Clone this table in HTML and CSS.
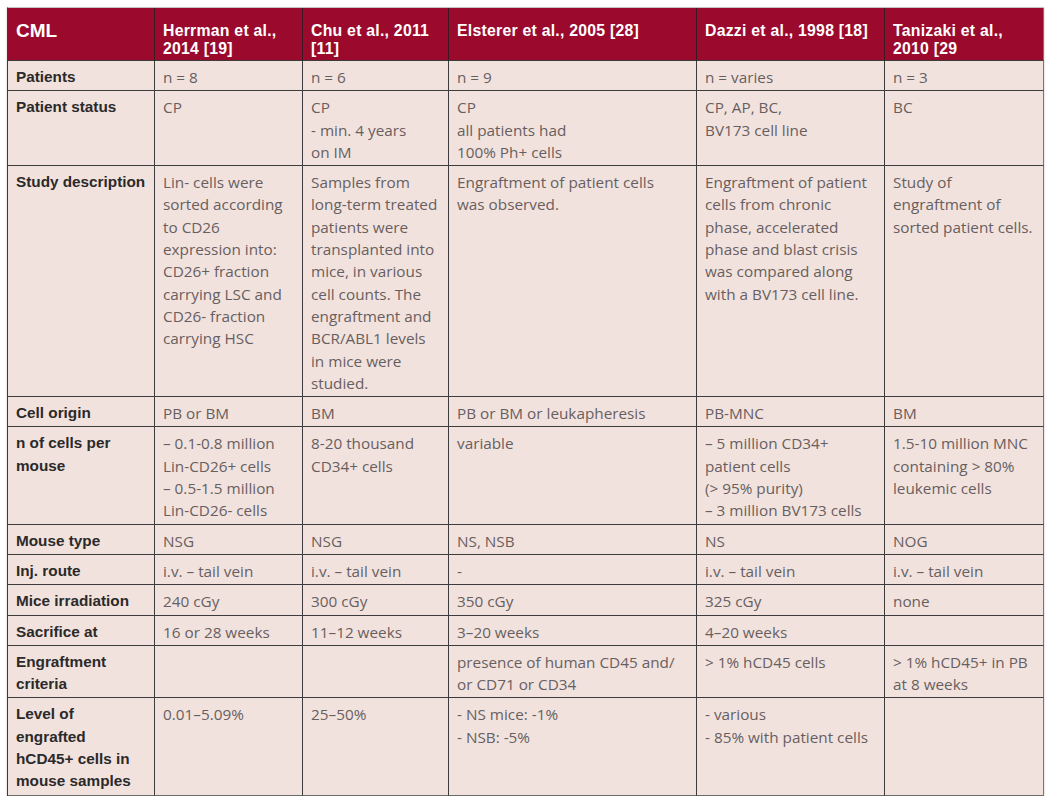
FILE: index.html
```html
<!DOCTYPE html>
<html>
<head>
<meta charset="utf-8">
<link rel="stylesheet" href="styles.css">
</head>
<body>
<div class="page">
<table class="cml">
  <colgroup>
    <col class="c1"><col class="c2"><col class="c3"><col class="c4"><col class="c5"><col class="c6">
  </colgroup>
  <thead>
    <tr>
      <th class="title">CML</th>
      <th>Herrman et al.,<br>2014 [19]</th>
      <th>Chu et al., 2011<br>[11]</th>
      <th>Elsterer et al., 2005 [28]</th>
      <th>Dazzi et al., 1998 [18]</th>
      <th>Tanizaki et al.,<br>2010 [29</th>
    </tr>
  </thead>
  <tbody>
    <tr>
      <th>Patients</th>
      <td>n = 8</td><td>n = 6</td><td>n = 9</td><td>n = varies</td><td>n = 3</td>
    </tr>
    <tr>
      <th>Patient status</th>
      <td>CP</td>
      <td>CP<br>- min. 4 years<br>on IM</td>
      <td>CP<br>all patients had<br>100% Ph+ cells</td>
      <td>CP, AP, BC,<br>BV173 cell line</td>
      <td>BC</td>
    </tr>
    <tr>
      <th>Study description</th>
      <td>Lin- cells were<br>sorted according<br>to CD26<br>expression into:<br>CD26+ fraction<br>carrying LSC and<br>CD26- fraction<br>carrying HSC</td>
      <td>Samples from<br>long-term treated<br>patients were<br>transplanted into<br>mice, in various<br>cell counts. The<br>engraftment and<br>BCR/ABL1 levels<br>in mice were<br>studied.</td>
      <td>Engraftment of patient cells<br>was observed.</td>
      <td>Engraftment of patient<br>cells from chronic<br>phase, accelerated<br>phase and blast crisis<br>was compared along<br>with a BV173 cell line.</td>
      <td>Study of<br>engraftment of<br>sorted patient cells.</td>
    </tr>
    <tr>
      <th>Cell origin</th>
      <td>PB or BM</td><td>BM</td><td>PB or BM or leukapheresis</td><td>PB-MNC</td><td>BM</td>
    </tr>
    <tr>
      <th>n of cells per<br>mouse</th>
      <td>– 0.1-0.8 million<br>Lin-CD26+ cells<br>– 0.5-1.5 million<br>Lin-CD26- cells</td>
      <td>8-20 thousand<br>CD34+ cells</td>
      <td>variable</td>
      <td>– 5 million CD34+<br>patient cells<br>(&gt; 95% purity)<br>– 3 million BV173 cells</td>
      <td>1.5-10 million MNC<br>containing &gt; 80%<br>leukemic cells</td>
    </tr>
    <tr>
      <th>Mouse type</th>
      <td>NSG</td><td>NSG</td><td>NS, NSB</td><td>NS</td><td>NOG</td>
    </tr>
    <tr>
      <th>Inj. route</th>
      <td>i.v. – tail vein</td><td>i.v. – tail vein</td><td>-</td><td>i.v. – tail vein</td><td>i.v. – tail vein</td>
    </tr>
    <tr>
      <th>Mice irradiation</th>
      <td>240 cGy</td><td>300 cGy</td><td>350 cGy</td><td>325 cGy</td><td>none</td>
    </tr>
    <tr>
      <th>Sacrifice at</th>
      <td>16 or 28 weeks</td><td>11–12 weeks</td><td>3–20 weeks</td><td>4–20 weeks</td><td></td>
    </tr>
    <tr>
      <th>Engraftment<br>criteria</th>
      <td></td><td></td>
      <td>presence of human CD45 and/<br>or CD71 or CD34</td>
      <td>&gt; 1% hCD45 cells</td>
      <td>&gt; 1% hCD45+ in PB<br>at 8 weeks</td>
    </tr>
    <tr>
      <th>Level of<br>engrafted<br>hCD45+ cells in<br>mouse samples</th>
      <td>0.01–5.09%</td>
      <td>25–50%</td>
      <td>- NS mice: -1%<br>- NSB: -5%</td>
      <td>- various<br>- 85% with patient cells</td>
      <td></td>
    </tr>
  </tbody>
</table>
</div>
</body>
</html>
```

FILE: styles.css
```css
html, body {
  margin: 0;
  padding: 0;
  background: #ffffff;
}

.page {
  padding: 7px 0 0 7px;
}

.cml {
  border-collapse: separate;
  border-spacing: 0;
  table-layout: fixed;
  width: 1037px;
  border-left: 1px solid #3c3c3c;
  border-top: 1px solid #c9c4c4;
  box-shadow: 0 1px 2px rgba(0, 0, 0, 0.25);
}

.c1 { width: 147px; }
.c2 { width: 148px; }
.c3 { width: 146px; }
.c4 { width: 248px; }
.c5 { width: 188px; }
.c6 { width: 159px; }

.cml th,
.cml td {
  text-align: left;
  vertical-align: top;
  white-space: nowrap;
  border-right: 1px solid #3c3c3c;
  border-bottom: 1px solid #3c3c3c;
}

.cml tr > *:last-child {
  border-right-color: #7a7676;
}

.cml tbody tr:last-child > * {
  border-bottom-color: #6e6a6a;
}

.cml thead th {
  background: #9b0a2d;
  color: #ffffff;
  font-family: "Liberation Sans", Arial, sans-serif;
  font-weight: bold;
  font-size: 15.8px;
  letter-spacing: 0.25px;
  line-height: 17.5px;
  padding: 14px 8px 3px 8px;
  border-right-color: #3a1a20;
}

.cml thead th.title {
  font-size: 19px;
  letter-spacing: 0;
}

.cml tbody th,
.cml tbody td {
  background: #f2e2de;
  padding: 5px 8px 2px 8px;
  line-height: 22.3px;
}

.cml tbody th {
  font-family: "Liberation Sans", Arial, sans-serif;
  font-weight: bold;
  font-size: 15.3px;
  color: #2b2a2a;
}

.cml tbody td {
  font-family: "Open Sans", "Liberation Sans", sans-serif;
  font-weight: 400;
  font-size: 15.3px;
  color: #675f5f;
}
```
